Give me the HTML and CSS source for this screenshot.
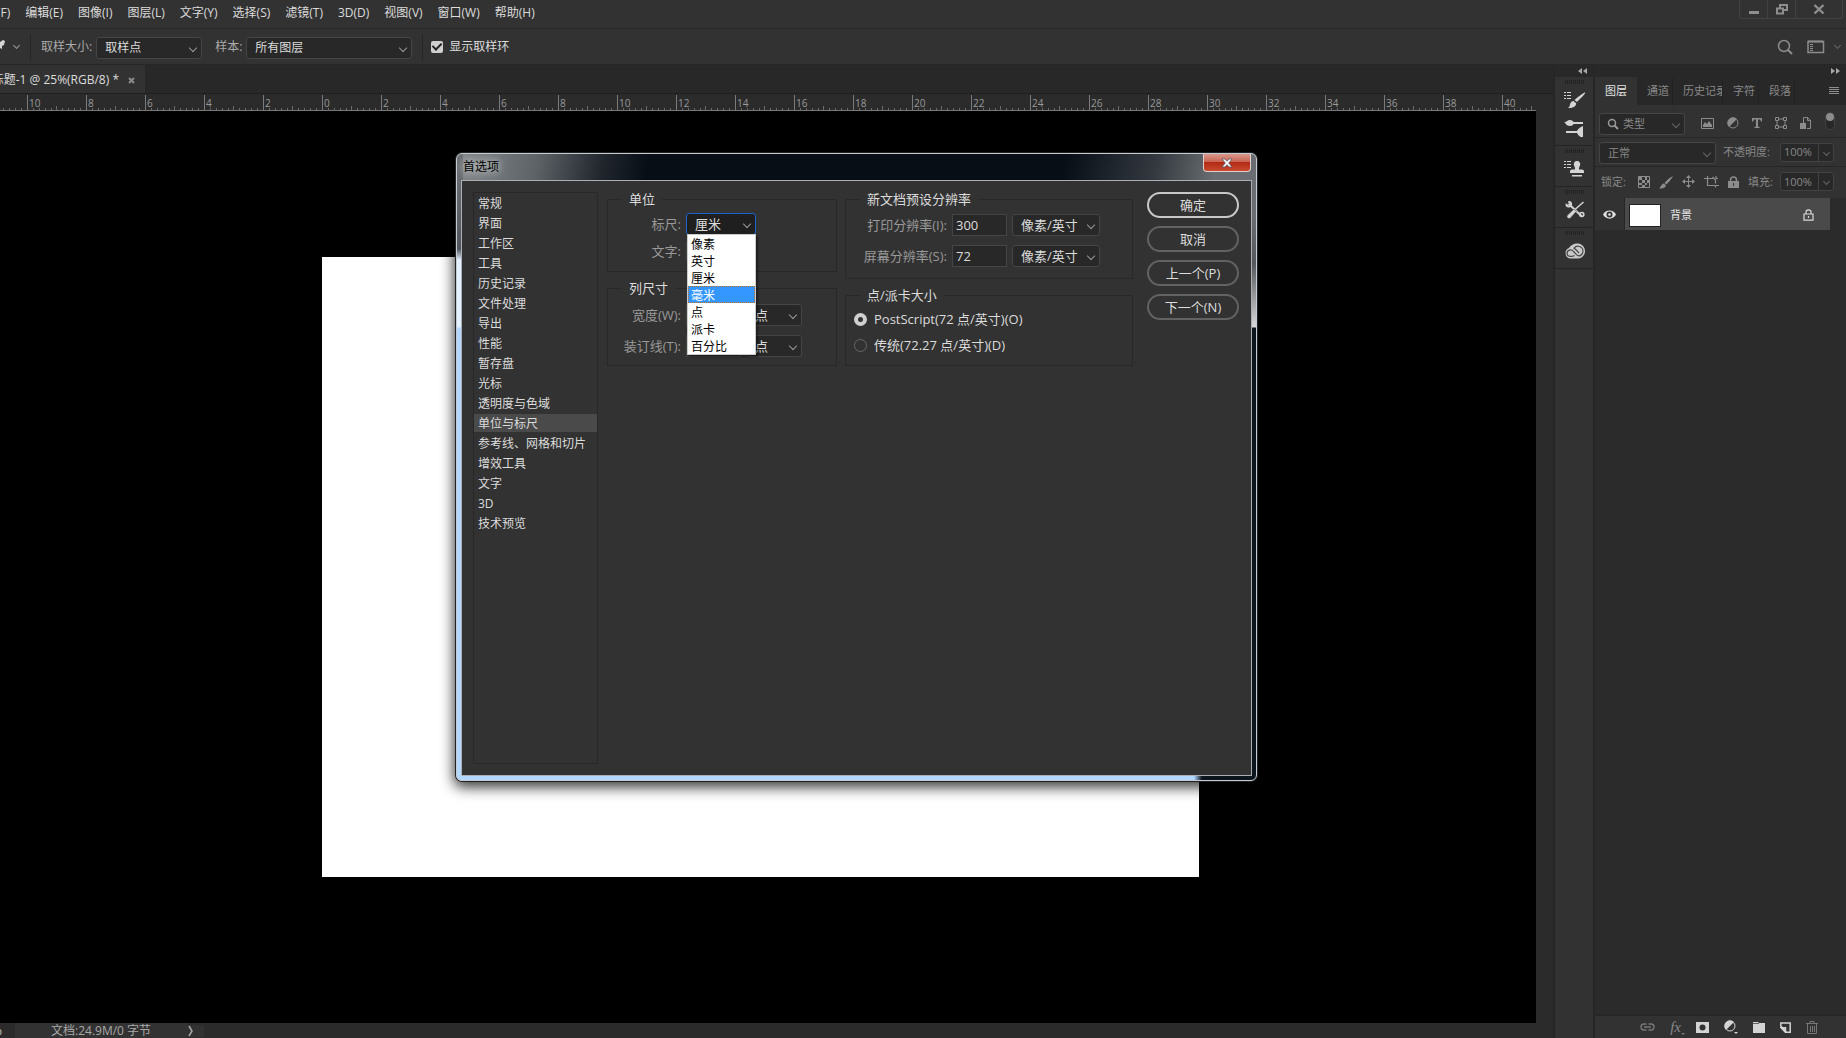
FILE: index.html
```html
<!DOCTYPE html>
<html lang="zh-CN">
<head>
<meta charset="utf-8">
<title>首选项</title>
<link rel="stylesheet" href="styles.css">
</head>
<body>
<header class="menubar">
  <nav class="menus">
    <button>文件(F)</button><button>编辑(E)</button><button>图像(I)</button><button>图层(L)</button><button>文字(Y)</button><button>选择(S)</button><button>滤镜(T)</button><button>3D(D)</button><button>视图(V)</button><button>窗口(W)</button><button>帮助(H)</button>
  </nav>
  <div class="winctl">
    <button aria-label="最小化"><svg width="12" height="12"><path d="M1 8h10v3H1z" fill="#8e8e8e"/></svg></button>
    <button aria-label="还原"><svg width="14" height="12" fill="none" stroke="#8e8e8e" stroke-width="2"><path d="M5 5V2h7v5H9M2 5.500h6v5H2z"/></svg></button>
    <button class="wide" aria-label="关闭"><svg width="12" height="12" stroke="#8e8e8e" stroke-width="2.400"><path d="M1.500 2l9 8.500M10.500 2l-9 8.500"/></svg></button>
  </div>
</header>

<div class="options">
  <svg class="dropper" width="5" height="16"><path d="M0 3l3-2 2 1-1 4-2 1v3L0 9z" fill="#d4d4d4"/></svg>
  <i class="chev"></i>
  <span class="rule"></span>
  <label for="size">取样大小:</label>
  <span class="sel w106"><select id="size"><option>取样点</option></select></span>
  <label for="sample" class="second">样本:</label>
  <span class="sel w164"><select id="sample"><option>所有图层</option></select></span>
  <span class="rule r2"></span>
  <label class="check"><input type="checkbox" checked>显示取样环</label>
  <div class="opt-right">
    <svg width="16" height="16" fill="none" stroke="#8c8c8c" stroke-width="1.500"><circle cx="7" cy="7" r="5.500"/><path d="M11 11l4 4" stroke-width="2"/></svg>
    <svg width="18" height="14" fill="none" stroke="#8c8c8c"><path d="M1 1.500h15.500v11H1z" stroke-width="1.500"/><path d="M3 4.500h3M3 6.500h3M3 8.500h3M3 10.500h3" /><path d="M1 1.500h15" stroke-width="2"/></svg>
    <i class="chev dim"></i>
  </div>
</div>

<main class="main">
  <section class="work">
    <div class="tabs"><div class="tab"><span>未标题-1 @ 25%(RGB/8) *</span><button aria-label="关闭文档"><svg width="7" height="7" stroke="#8a8a8a" stroke-width="2"><path d="M1 1l5 5M6 1L1 6"/></svg></button></div></div>
    <div class="stage">
      <div class="ruler">
        <svg class="ticks" width="100%" height="17" aria-hidden="true">
          <defs><pattern id="tk" x="-32" width="59" height="17" patternUnits="userSpaceOnUse">
            <path d="M.5 1v16" stroke="#7a7a7a"/>
            <path d="M6.500 14v3M12.500 14v3M18.500 14v3M24.500 14v3M29.500 12v5M35.500 14v3M41.500 14v3M47.500 14v3M53.500 14v3" stroke="#6a6a6a"/>
          </pattern></defs>
          <rect width="100%" height="17" fill="url(#tk)"/>
        </svg>
        <div class="nums"><span>12</span><span>10</span><span>8</span><span>6</span><span>4</span><span>2</span><span>0</span><span>2</span><span>4</span><span>6</span><span>8</span><span>10</span><span>12</span><span>14</span><span>16</span><span>18</span><span>20</span><span>22</span><span>24</span><span>26</span><span>28</span><span>30</span><span>32</span><span>34</span><span>36</span><span>38</span><span>40</span></div>
      </div>
      <div class="canvas"><div class="paper"></div></div>
      <footer class="status"><span class="pct">%</span><span class="info">文档:24.9M/0 字节</span><svg width="6" height="12" fill="none" stroke="#a8a8a8" stroke-width="1.500"><path d="M1 1l3 5-3 5"/></svg></footer>
    </div>
  </section>

  <aside class="dock">
    <button class="fold" aria-label="展开"><svg width="9" height="6" fill="#a8a8a8"><path d="M4 0v6L0 3zM9 0v6L5 3z"/></svg></button>
    <div class="group">
      <i class="grip"></i>
      <svg width="22" height="18" fill="#d4d4d4"><path d="M0 1h2v1H0zM3 1h4v1H3zM0 4h2v1H0zM3 4h4v1H3zM0 7h2v1H0zM3 7h4v1H3z"/><path d="M21 1.500c.5 1-1 2.500-8 9.500l-2.500-2C17 3.500 20 1.500 21 1.500zM9.500 10l2.700 2.200c0 3-3 5-8.200 4.800 2-1 1.500-3 2.500-5 .7-1.300 1.800-2 3-2z"/></svg>
      <svg width="22" height="18" fill="#d4d4d4"><path d="M0 3c3 .5 3-2 6-2 2 0 3 1 3.500 2H19v2H9.500C9 6 8 7 6 7 2 7 2 4 0 3zM2 12h11c1-2 3-4 6-5v12c-3-1-5-3-6-5H2z"/></svg>
    </div>
    <div class="group">
      <i class="grip"></i>
      <svg width="22" height="18" fill="#d4d4d4"><path d="M0 1h2v1H0zM3 1h4v1H3zM0 4h2v1H0zM3 4h4v1H3zM0 7h2v1H0zM3 7h4v1H3z"/><path d="M13 1a3.200 3.200 0 0 1 3 4.500c-.8 1.500-1 2-1 4h3c1.500 0 2 1 2 2V13H6v-1.500c0-1 .5-2 2-2h3c0-2-.2-2.500-1-4A3.200 3.200 0 0 1 13 1zM8 15h10v1.500H8z"/></svg>
    </div>
    <div class="group">
      <i class="grip"></i>
      <svg width="22" height="18" viewBox="0 0 20 18"><path d="M3.500 2.800L17 15.500" stroke="#d4d4d4" stroke-width="2"/><circle cx="3.800" cy="3.200" r="2.300" fill="none" stroke="#d4d4d4" stroke-width="2"/><circle cx="16.800" cy="13.500" r="2" fill="none" stroke="#d4d4d4" stroke-width="1.600"/><path d="M0 0h3.500L3 3 0 2.500z" fill="#323232"/><path d="M18.500 1L10 8.500" stroke="#d4d4d4" stroke-width="1.500"/><path d="M9 8l2.500 2.300-6 6.700c-2 1.500-4.500-.5-3.200-2.700z" fill="#d4d4d4" stroke="#323232" stroke-width=".5"/></svg>
    </div>
    <div class="group">
      <i class="grip"></i>
      <svg width="22" height="18" viewBox="0 0 22 17"><path d="M6 16a5.500 5.500 0 0 1-1-10.500C7 2 11 .5 14 1c4 .5 7 3.500 7 7.500S18 16 14 16z" fill="#c9c9c9"/><path d="M10.500 13C8 14.500 3 14.500 3 10.800S7.500 6.500 9.500 9l3 3.200c2.500 2.500 6.500.5 6.500-3.400 0-4.800-6-7-9-3M9.500 5.800c2 .2 3 1.700 5.500 4.700" fill="none" stroke="#484848" stroke-width="1.200"/></svg>
    </div>
  </aside>

  <aside class="panel">
    <button class="fold end" aria-label="折叠"><svg width="9" height="6" fill="#a8a8a8"><path d="M0 0v6l4-3zM5 0v6l4-3z"/></svg></button>
    <div class="ptabs"><button class="on">图层</button><button>通道</button><button class="clip"><span>历史记录</span></button><button>字符</button><button>段落</button>
      <button class="burger" aria-label="面板菜单"><svg width="10" height="8" fill="#8c8c8c"><path d="M0 0h10v1H0zM0 2h10v1H0zM0 4h10v1H0zM0 6h10v1H0z"/></svg></button></div>
    <div class="prow filter">
      <span class="sel w86"><svg class="mag" width="12" height="12" fill="none" stroke="#999" stroke-width="1.500"><circle cx="5" cy="5" r="3.500"/><path d="M7.500 7.500L11 11" stroke-width="2"/></svg><select aria-label="类型" class="typ"><option>类型</option></select></span>
      <div class="ficons">
        <svg width="13" height="11"><path d="M.5.5h12v10H.5z" fill="none" stroke="#8c8c8c"/><path d="M2 9V7l2-3 2 2 2-3 3 4v2z" fill="#8c8c8c"/></svg>
        <svg width="12" height="12"><circle cx="6" cy="6" r="5" fill="none" stroke="#8c8c8c"/><path d="M2 10A5.500 5.500 0 0 1 10 2z" fill="#8c8c8c"/></svg>
        <svg width="10" height="10" fill="#8c8c8c"><path d="M0 0h10v3.500H9L8 1.500H6v7l1.500.5v1h-5V9L4 8.500v-7H2L1 3.500H0z"/></svg>
        <svg width="12" height="12" fill="none" stroke="#8c8c8c"><path d="M3.500 2h5M3.500 10h5M2 3.500v5M10 3.500v5"/><path d="M.5.5h3v3h-3zM8.500.5h3v3h-3zM.5 8.500h3v3h-3zM8.500 8.500h3v3h-3z"/></svg>
        <svg width="11" height="13"><path d="M3.500 6V.5h4l3 3v8H7M7.500.5v3h3" fill="none" stroke="#8c8c8c"/><path d="M0 6h6v6H0z" fill="#8c8c8c"/></svg>
      </div>
      <svg class="toggle" width="10" height="18"><rect x=".5" y=".5" width="9" height="17" rx="4.500" fill="#282828" stroke="#424242"/><circle cx="5" cy="5" r="4" fill="#8c8c8c"/></svg>
    </div>
    <div class="prow blend">
      <span class="sel w117"><select aria-label="混合模式"><option>正常</option></select></span>
      <label for="opa">不透明度:</label>
      <span class="num"><input id="opa" value="100%"><button aria-label="不透明度选项"><i class="chev dim"></i></button></span>
    </div>
    <div class="prow lock">
      <span class="lab">锁定:</span>
      <div class="licons">
        <svg width="12" height="12"><path d="M.5.5h11v11H.5z" fill="none" stroke="#8c8c8c"/><path d="M1 1h3v3H1zM7 1h2v3H7zM4 4h3v3H4zM9 4h2v3H9zM1 7h3v2H1zM7 7h2v2H7zM4 9h3v2H4z" fill="#8c8c8c"/></svg>
        <svg width="14" height="14" fill="#8c8c8c"><path d="M14 1C12 5 9 8 7.500 9.500L5.500 8C7.500 5.500 11 2 14 1zM5 8.500L7 10.500c-1 3-4 3-7 3C2 12 2 9 5 8.500z"/></svg>
        <svg width="13" height="13" fill="#8c8c8c"><path d="M6.500 0L9 3H7v3h3V4l3 2.500L10 9V7H7v3h2l-2.500 3L4 10h2V7H3v2L0 6.500 3 4v2h3V3H4z"/></svg>
        <svg width="15" height="13" fill="none" stroke="#8c8c8c" stroke-width="1.200"><path d="M0 3.500h9M3.500 1v9.500h8v2M11.500 8.500V5l-3-3M12 10.500h3M12 1v2.500h2"/></svg>
        <svg width="11" height="12"><path d="M2.500 5V4a3 3 0 0 1 6 0v1" fill="none" stroke="#8c8c8c" stroke-width="1.500"/><path d="M0 5h11v7H0z" fill="#8c8c8c"/><path d="M5 7h1v3H5z" fill="#323232"/></svg>
      </div>
      <label for="fil">填充:</label>
      <span class="num"><input id="fil" value="100%"><button aria-label="填充选项"><i class="chev dim"></i></button></span>
    </div>
    <div class="layers">
      <div class="layer">
        <button class="eye" aria-label="可见性"><svg width="13" height="9"><path d="M0 4.500C2.500-1 10.500-1 13 4.500 10.500 10 2.500 10 0 4.500z" fill="#e0e0e0"/><circle cx="6.500" cy="4.500" r="3" fill="#323232"/><circle cx="6.500" cy="4.500" r="1.300" fill="#e0e0e0"/></svg></button>
        <div class="lbody"><span class="thumb"></span><span class="lname">背景</span><svg width="11" height="12" fill="none" stroke="#d8d8d8" stroke-width="1.200"><path d="M1 5h9v6.200H1zM3 5V3a2.500 2.200 0 0 1 5 0v2M5.500 7v2"/></svg></div>
      </div>
    </div>
    <div class="pfoot">
      <button aria-label="链接"><svg width="15" height="8" fill="none" stroke="#777" stroke-width="1.400"><path d="M6.500 1H4a3 3 0 0 0 0 6h2.500M8.500 1H11a3 3 0 0 1 0 6H8.500M4 4h7"/></svg></button>
      <button class="fx" aria-label="图层样式"><span>fx</span><svg width="4" height="2" fill="#777"><path d="M0 0h4L2 2z"/></svg></button>
      <button aria-label="蒙版"><svg width="13" height="11"><path d="M0 0h13v11H0z" fill="#d4d4d4"/><circle cx="6.500" cy="5.500" r="3" fill="#323232"/></svg></button>
      <button aria-label="调整"><svg width="14" height="14"><circle cx="6" cy="6" r="5" fill="none" stroke="#d4d4d4"/><path d="M2 10A5.500 5.500 0 0 1 10 2zM10 12h4l-2 2z" fill="#d4d4d4"/></svg></button>
      <button aria-label="新建组"><svg width="12" height="11" fill="#d4d4d4"><path d="M0 0h5l1 1h6v10H0z"/><path d="M0 1.500h6" stroke="#323232" stroke-width=".7"/></svg></button>
      <button aria-label="新建图层"><svg width="11" height="11" fill="none" stroke="#d4d4d4" stroke-width="1.500"><path d="M.8 4V1h9.400v9.200H6.500zM1 5.800h4.500v4.500z"/></svg></button>
      <button aria-label="删除"><svg width="12" height="13" fill="none" stroke="#777"><path d="M0 2.500h12M4 2V.5h4V2M1.500 3v9.500h9V3M4.500 5v6M6.500 5v6M8.500 5v6"/></svg></button>
    </div>
  </aside>
</main>

<div class="dialog" role="dialog" aria-labelledby="dt">
  <div class="title"><h1 id="dt">首选项</h1><button class="close" aria-label="关闭"><svg width="12" height="10"><path d="M1 1h3l2 2.300L8 1h3L7.700 5 11 9H8L6 6.700 4 9H1l3.300-4z" fill="#fff" stroke="#5a5a66" stroke-width=".8"/></svg></button></div>
  <form class="dbody">
    <ul class="cats">
      <li>常规</li><li>界面</li><li>工作区</li><li>工具</li><li>历史记录</li><li>文件处理</li><li>导出</li><li>性能</li><li>暂存盘</li><li>光标</li><li>透明度与色域</li><li class="cur">单位与标尺</li><li>参考线、网格和切片</li><li>增效工具</li><li>文字</li><li>3D</li><li>技术预览</li>
    </ul>
    <div class="col left">
      <fieldset class="f1"><legend>单位</legend>
        <div class="row"><label for="ru">标尺:</label>
          <span class="open"><span class="sel w70 focus"><select id="ru"><option>厘米</option></select></span>
            <ul class="list" role="listbox"><li>像素</li><li>英寸</li><li>厘米</li><li class="hot">毫米</li><li>点</li><li>派卡</li><li>百分比</li></ul></span></div>
        <div class="row"><label for="ty">文字:</label><span class="sel w70"><select id="ty"><option>点</option></select></span></div>
      </fieldset>
      <fieldset class="f2"><legend>列尺寸</legend>
        <div class="row"><label for="wi">宽度(W):</label><input class="txt" id="wi" value="180"><span class="sel w56"><select aria-label="宽度单位"><option>点</option></select></span></div>
        <div class="row"><label for="gu">装订线(T):</label><input class="txt" id="gu" value="12"><span class="sel w56"><select aria-label="装订线单位"><option>点</option></select></span></div>
      </fieldset>
    </div>
    <div class="col right">
      <fieldset class="f3"><legend>新文档预设分辨率</legend>
        <div class="row"><label for="pr">打印分辨率(I):</label><input class="txt" id="pr" value="300"><span class="sel w88"><select aria-label="打印分辨率单位"><option>像素/英寸</option></select></span></div>
        <div class="row"><label for="sc">屏幕分辨率(S):</label><input class="txt" id="sc" value="72"><span class="sel w88"><select aria-label="屏幕分辨率单位"><option>像素/英寸</option></select></span></div>
      </fieldset>
      <fieldset class="f4"><legend>点/派卡大小</legend>
        <label class="radio"><input type="radio" name="pt" checked>PostScript(72 点/英寸)(O)</label>
        <label class="radio"><input type="radio" name="pt">传统(72.27 点/英寸)(D)</label>
      </fieldset>
    </div>
    <div class="btns"><button type="button" class="ok">确定</button><button type="button">取消</button><button type="button">上一个(P)</button><button type="button">下一个(N)</button></div>
  </form>
</div>
</body>
</html>
```
FILE: styles.css
```css
* { box-sizing: border-box; }
body {
  margin: 0;
  height: 100vh;
  display: flex;
  flex-direction: column;
  overflow: hidden;
  background: #323232;
  color: #dcdcdc;
  font: 12px/16px "Open Sans", "Noto Sans CJK SC", sans-serif;
}
button, input, select { font: inherit; color: inherit; margin: 0; }
button { background: none; border: 0; padding: 0; white-space: nowrap; }
ul { list-style: none; margin: 0; padding: 0; }
svg { display: block; flex: none; }
label { white-space: nowrap; }

/* menu bar */
.menubar { height: 29px; flex: none; display: flex; justify-content: space-between; border-bottom: 1px solid #262626; }
.menus { display: flex; align-items: center; gap: 15px; margin: 0 0 2px -27px; }
.winctl { display: flex; height: 19px; margin-right: 3px; border: 1px solid #424242; border-top: 0; border-radius: 0 0 3px 3px; }
.winctl button { width: 28px; display: flex; align-items: center; justify-content: center; border-right: 1px solid #424242; }
.winctl .wide { width: 46px; border: 0; }

/* controls shared by bars, panels and the dialog */
.sel { display: inline-flex; align-items: center; position: relative; height: 22px; background: #282828; border: 1px solid #454545; border-radius: 3px; flex: none; }
.sel select { appearance: none; width: 100%; height: 20px; padding: 0 16px 0 8px; border: 0; background: none; outline: 0; }
.sel::after, .chev { content: ""; width: 5px; height: 5px; border: solid #999; border-width: 0 1px 1px 0; transform: rotate(45deg); flex: none; }
.sel::after { position: absolute; right: 5px; top: 7px; pointer-events: none; }
.chev.dim, .panel .sel::after { border-color: #666; }
.w56 { width: 56px; }
.w70 { width: 70px; }
.w86 { width: 86px; }
.w88 { width: 88px; }
.w106 { width: 106px; }
.w117 { width: 117px; }
.w164 { width: 166px; }

/* options bar */
.options { height: 36px; flex: none; display: flex; align-items: center; border-bottom: 1px solid #262626; }
.options .chev { margin: 0 11px 3px 9px; }
.options .sel { margin-top: 2px; }
.rule { width: 1px; height: 26px; background: #262626; margin-right: 10px; }
.options label { color: #aaa; margin-right: 4px; }
.options .second { margin-left: 13px; }
.r2 { margin: 0 8px 0 10px; }
.options .check { display: flex; align-items: center; gap: 6px; color: #dcdcdc; }
.check input { appearance: none; width: 12px; height: 12px; border-radius: 2px; background: #d0d0d0; display: grid; place-items: center; }
.check input:checked::after { content: ""; width: 4px; height: 7px; border: solid #222; border-width: 0 2px 2px 0; transform: rotate(45deg); margin-bottom: 2px; }
.opt-right { margin-left: auto; display: flex; align-items: center; gap: 14px; padding-right: 6px; }
.opt-right .chev { margin: 0 0 3px -4px; }

/* main row */
.main { flex: 1; min-height: 0; display: flex; gap: 2px; background: #262626; }
.work { flex: 1; min-width: 0; display: flex; flex-direction: column; background: #2b2b2b; }
.tabs { height: 29px; flex: none; display: flex; background: #282828; border-bottom: 1px solid #1f1f1f; }
.tab { display: flex; align-items: center; justify-content: flex-end; gap: 9px; width: 145px; padding: 2px 10px 0 0; background: #323232; white-space: nowrap; }
.stage { flex: 1; min-height: 0; display: flex; flex-direction: column; margin-right: 17px; }
.ruler { height: 17px; flex: none; display: grid; overflow: hidden; border-bottom: 1px solid #777; background: #2b2b2b; }
.ruler > * { grid-area: 1 / 1; min-width: 0; }
.nums { display: flex; margin-left: -32px; padding-top: 1px; font-size: 10px; color: #999; }
.nums span { flex: 0 0 59px; padding-left: 2px; }
.canvas { flex: 1; min-height: 0; background: #000; padding: 146px 0 0 322px; overflow: hidden; }
.paper { width: 877px; height: 620px; background: #fff; }
.status { height: 15px; flex: none; display: flex; align-items: center; background: #2b2b2b; color: #a8a8a8; overflow: hidden; }
.status .pct { width: 15px; direction: rtl; overflow: hidden; padding-right: 13px; color: #ddd; }
.status .info { padding: 0 37px 0 36px; background: #323232; }
.status svg { padding: 0; width: 16px; background: #323232; }

.fold { height: 12px; flex: none; display: flex; align-items: center; justify-content: center; padding-left: 17px; background: #282828; }
.fold.end { justify-content: flex-end; padding-right: 6px; }
.dock { width: 38px; flex: none; display: flex; flex-direction: column; background: #323232; }
.group { display: flex; flex-direction: column; align-items: center; gap: 10px; padding: 3px 0 8px 2px; border-bottom: 1px solid #242424; }
.grip { width: 20px; height: 4px; margin-bottom: -3px; background: repeating-linear-gradient(90deg, #222 0 1px, transparent 1px 2px); }

/* layers panel */
.panel { width: 251px; flex: none; display: flex; flex-direction: column; background: #323232; font-size: 11px; color: #888; }
.ptabs { height: 28px; flex: none; display: flex; background: #282828; }
.ptabs button { padding: 0 3px 0 10px; border-right: 1px solid #222; }
.ptabs .on { padding: 0 10px; background: #323232; color: #e4e4e4; border: 0; }
.ptabs .clip { padding-right: 0; }
.ptabs .clip span { display: block; width: 39px; overflow: hidden; }
.ptabs .burger { margin-left: auto; border: 0; padding: 0 7px; }
.prow { flex: none; display: flex; align-items: center; padding-left: 4px; }
.filter { height: 33px; padding-top: 6px; border-bottom: 1px solid #262626; }
.mag { margin-left: 7px; }
.sel .typ { padding: 0 0 0 4px; }
.ficons { display: flex; align-items: center; gap: 13px; margin: 0 14px 2px 16px; }
.toggle { margin-bottom: 6px; }
.blend { height: 29px; padding-top: 2px; border-bottom: 1px solid #262626; }
.blend label { margin: 0 0 2px 7px; }
.num { display: flex; height: 19px; border: 1px solid #424242; border-radius: 3px; background: #282828; margin: 0 12px 2px auto; }
.num input { width: 38px; border: 0; background: none; padding: 0 0 0 3px; outline: 0; border-right: 1px solid #424242; }
.num button { width: 14px; display: grid; place-items: center; }
.lock { height: 31px; padding: 0 0 0 6px; }
.licons { display: flex; align-items: center; gap: 9px; margin: 0 9px 2px 12px; }
.lock .lab, .lock label { margin-bottom: 2px; }
.layers { flex: 1; min-height: 0; background: #2b2b2b; }
.layer { display: flex; height: 32px; margin-right: 16px; }
.eye { width: 30px; display: grid; place-items: center; background: #323232; border-right: 1px solid #262626; }
.lbody { flex: 1; display: flex; align-items: center; background: #4a4a4a; color: #e8e8e8; padding: 2px 16px 0 4px; }
.thumb { width: 32px; height: 23px; background: #fff; border: 1px solid #222; margin-right: 9px; }
.lname { flex: 1; }
.pfoot { height: 24px; flex: none; display: flex; align-items: center; gap: 15px; justify-content: flex-end; padding-right: 28px; border-top: 2px solid #262626; }
.fx { display: flex; align-items: flex-end; margin-right: -4px; font: italic 15px/15px "Liberation Serif", serif; color: #888; }

/* preferences window */
.dialog {
  position: absolute; left: 456px; top: 153px; width: 801px; height: 628px;
  display: flex; flex-direction: column;
  padding: 0 5px 5px;
  border: 1px solid #c4cbd2; border-radius: 6px;
  box-shadow: 0 0 0 1px #222, 0 4px 14px 2px rgba(0, 0, 0, .8);
  background:
    linear-gradient(90deg, #b3d7ff 737px, #0c141c 745px) left bottom / 100% 6px no-repeat,
    linear-gradient(#6a6e72 20px, #50565c 95px, #e4f1ff 106px, #e4f1ff 172px, #b3d7ff 175px) left top / 6px 100% no-repeat,
    linear-gradient(#6a6e72 60px, #55595d 110px, #d8d8d8 173px, #0c141c 174px) right top / 6px 100% no-repeat,
    linear-gradient(100deg, #85898c 0, #5d6367 80px, #20262c 145px, #080e16 190px, #080e16 600px, #33393f 690px, #6a6e72 750px);
}
.title { height: 27px; flex: none; display: flex; justify-content: space-between; align-items: flex-start; }
.title h1 { margin: 4px 0 0 1px; font: inherit; line-height: 18px; color: #000; text-shadow: 0 0 8px #ccc, 0 0 8px #ccc; }
.close { width: 48px; height: 18px; display: grid; place-items: center; border: 1px solid #e0cfcc; border-top: 0; border-radius: 0 0 4px 4px; background: linear-gradient(#d9988c, #c96555 45%, #b32a14 50%, #c94a30); }
.dbody { flex: 1; display: flex; align-items: flex-start; background: #323232; outline: 1px solid #a9afb5; padding: 11px 12px 11px 11px; font-size: 13px; line-height: 18px; }
.cats { width: 125px; align-self: stretch; border: 1px solid #282828; padding: 1px 0; font-size: 12px; display: flex; flex-direction: column; gap: 2px; }
.cats li { padding-left: 4px; height: 18px; line-height: 20px; }
.cats .cur { background: #4a4a4a; }
.col { display: flex; flex-direction: column; gap: 7px; margin-top: -2px; }
.left { width: 230px; margin-left: 9px; }
.right { width: 288px; margin-left: 8px; }
fieldset { margin: 0; border: 1px solid #282828; padding: 0; min-width: 0; }
legend { margin-left: 14px; padding: 0 7px; line-height: 18px; }
.row { display: flex; align-items: center; gap: 5px; height: 22px; }
.row + .row { margin-top: 9px; }
.row > label { color: #999; text-align: right; width: 73px; }
.right .row > label { width: 101px; }
.f1 { height: 82px; }
.f1 .row { margin-top: 5px; }
.f2 { height: 87px; }
.f2 legend + .row { margin-top: 7px; }
.f3 { height: 89px; }
.f3 legend + .row { margin-top: 6px; }
.f4 { height: 80px; padding-top: 6px; }
.txt { width: 55px; height: 22px; border: 1px solid #454545; background: #282828; padding: 0 3px; }
.radio { display: flex; align-items: center; gap: 7px; margin: 0 0 8px 8px; }
.radio input { appearance: none; width: 13px; height: 13px; border-radius: 50%; border: 1px solid #666; }
.radio input:checked { border: 4px solid #d0d0d0; }
.open { position: relative; }
.open .sel { display: flex; }
.focus { border-color: #1d64c8; background: #1f1f1f; }
.list { position: absolute; z-index: 2; left: 1px; top: 21px; width: 69px; border: 1px solid #ccc; background: #fff; color: #000; font-size: 12px; line-height: 19px; box-shadow: 2px 2px 2px rgba(0, 0, 0, .4); }
.list li { height: 17px; padding-left: 3px; }
.list .hot { background: #3397ff; color: #fff; outline: 1px dotted #c87020; outline-offset: -1px; }
.btns { display: flex; flex-direction: column; gap: 8px; margin-left: auto; }
.btns button { width: 92px; height: 26px; border: 2px solid #626262; border-radius: 13px; line-height: 20px; }
.btns .ok { border-color: #c8c8c8; }
```
